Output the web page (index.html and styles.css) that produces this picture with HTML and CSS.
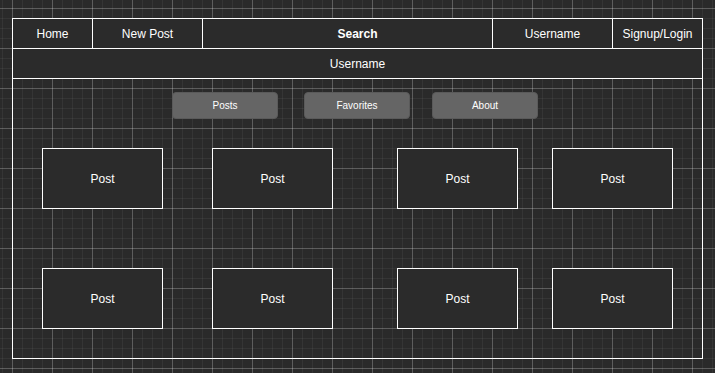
FILE: index.html
```html
<!DOCTYPE html>
<html lang="en">
<head>
<meta charset="utf-8">
<title>Profile</title>
<link rel="stylesheet" href="styles.css">
</head>
<body>
<div class="frame">
  <nav class="nav">
    <div class="cell home">Home</div>
    <div class="cell newpost">New Post</div>
    <div class="cell search">Search</div>
    <div class="cell user">Username</div>
    <div class="cell login">Signup/Login</div>
  </nav>
  <div class="title">Username</div>
  <div class="tabs">
    <div class="tab">Posts</div>
    <div class="tab fav">Favorites</div>
    <div class="tab">About</div>
  </div>
  <div class="posts">
    <div class="post">Post</div>
    <div class="post">Post</div>
    <div class="post">Post</div>
    <div class="post">Post</div>
    <div class="post">Post</div>
    <div class="post">Post</div>
    <div class="post">Post</div>
    <div class="post">Post</div>
  </div>
</div>
</body>
</html>
```
FILE: styles.css
```css
html, body {
  margin: 0;
  padding: 0;
}
body {
  width: 715px;
  height: 373px;
  overflow: hidden;
  background-color: #2a2a2a;
  background-image:
    linear-gradient(to right, rgba(255,255,255,0.2) 1px, transparent 1px),
    linear-gradient(to bottom, rgba(255,255,255,0.2) 1px, transparent 1px),
    linear-gradient(to right, rgba(255,255,255,0.05) 1px, transparent 1px),
    linear-gradient(to bottom, rgba(255,255,255,0.05) 1px, transparent 1px);
  background-size: 40px 40px, 40px 40px, 10px 10px, 10px 10px;
  background-position: 12px 8px;
  font-family: "Liberation Sans", Arial, sans-serif;
  color: #fff;
}
.frame {
  box-sizing: border-box;
  margin: 18px 0 0 12px;
  width: 691px;
  height: 341px;
  border: 1px solid #fff;
}
.nav {
  display: flex;
  height: 30px;
  border-bottom: 1px solid #fff;
  box-sizing: border-box;
  background: #2b2b2b;
}
.cell {
  box-sizing: border-box;
  display: flex;
  align-items: center;
  justify-content: center;
  font-size: 12px;
  border-right: 1px solid #fff;
}
.home { width: 80px; }
.newpost { width: 110px; }
.search { width: 290px; font-weight: bold; padding-left: 20px; }
.user { width: 120px; }
.login { width: 89px; border-right: none; }
.title {
  box-sizing: border-box;
  height: 30px;
  border-bottom: 1px solid #fff;
  background: #2b2b2b;
  display: flex;
  align-items: center;
  justify-content: center;
  font-size: 12px;
}
.tabs {
  display: flex;
  padding: 13px 0 0 159px;
}
.tab {
  box-sizing: border-box;
  width: 106px;
  height: 27px;
  background: #656565;
  border: 1px solid #5a5a5a;
  border-radius: 4px;
  display: flex;
  align-items: center;
  justify-content: center;
  font-size: 10px;
}
.fav {
  margin: 0 22px 0 26px;
}
.posts {
  display: grid;
  grid-template-columns: 29px 121px 49px 121px 64px 121px 34px 121px;
  grid-auto-rows: 61px;
  row-gap: 59px;
  padding-top: 29px;
}
.post {
  box-sizing: border-box;
  border: 1px solid #fff;
  background: #2b2b2b;
  display: flex;
  align-items: center;
  justify-content: center;
  font-size: 12px;
}
.post:nth-child(4n+1) { grid-column: 2; }
.post:nth-child(4n+2) { grid-column: 4; }
.post:nth-child(4n+3) { grid-column: 6; }
.post:nth-child(4n+4) { grid-column: 8; }
```
